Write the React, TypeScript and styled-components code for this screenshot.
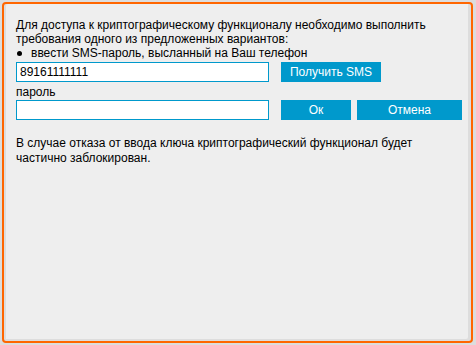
import styled, { createGlobalStyle } from "styled-components";

const GlobalStyle = createGlobalStyle`
  html, body {
    margin: 0;
    padding: 0;
    background: #dddddd;
  }
  body {
    font-family: "Liberation Sans", Arial, sans-serif;
    font-size: 12px;
    color: #000;
  }
`;

const Dialog = styled.div`
  box-sizing: border-box;
  margin: 2px 0 0 2px;
  width: 471px;
  height: 341px;
  border: 2px solid #ff6600;
  border-radius: 4px;
  background: #eeeeee;
  box-shadow: inset 2px 0 0 #dddddd, inset -3px -2px 0 #dddddd;
  padding: 14px 12px 0 12px;
`;

const Text = styled.p`
  margin: 0;
  line-height: 14px;
`;

const Bullet = styled.div`
  display: flex;
  align-items: center;
  line-height: 14px;
  gap: 9px;
  &::before {
    content: "";
    width: 5px;
    height: 5px;
    border-radius: 50%;
    background: #000;
    margin-left: 1px;
  }
`;

const Row = styled.div<{ $top: number }>`
  display: flex;
  align-items: center;
  gap: 6px;
  margin-top: ${(p) => p.$top}px;
`;

const Field = styled.input`
  box-sizing: border-box;
  flex-shrink: 0;
  width: 253px;
  height: 20px;
  margin: 0 6px 0 0;
  border: 1px solid #0099cc;
  background: #fff;
  padding: 0 3px;
  font-family: "Liberation Sans", Arial, sans-serif;
  font-size: 12px;
  color: #000;
  outline: none;
`;

const Button = styled.button<{ $w: number }>`
  box-sizing: border-box;
  flex-shrink: 0;
  width: ${(p) => p.$w}px;
  height: 20px;
  border: none;
  border-radius: 0;
  background: #0099cc;
  color: #fff;
  font-family: "Liberation Sans", Arial, sans-serif;
  font-size: 12px;
  padding: 0;
  cursor: pointer;
`;

const Label = styled.div`
  line-height: 14px;
  margin-top: 3px;
`;

const Note = styled.p`
  margin: 16px 0 0 0;
  line-height: 15px;
`;

export default function App() {
  return (
    <>
      <GlobalStyle />
      <Dialog>
        <Text>
          Для доступа к криптографическому функционалу необходимо выполнить
          <br />
          требования одного из предложенных вариантов:
        </Text>
        <Bullet>ввести SMS-пароль, высланный на Ваш телефон</Bullet>
        <Row $top={2}>
          <Field defaultValue="89161111111" />
          <Button $w={100}>Получить SMS</Button>
        </Row>
        <Label>пароль</Label>
        <Row $top={1}>
          <Field type="password" />
          <Button $w={70}>Ок</Button>
          <Button $w={105}>Отмена</Button>
        </Row>
        <Note>
          В случае отказа от ввода ключа криптографический функционал будет
          <br />
          частично заблокирован.
        </Note>
      </Dialog>
    </>
  );
}
